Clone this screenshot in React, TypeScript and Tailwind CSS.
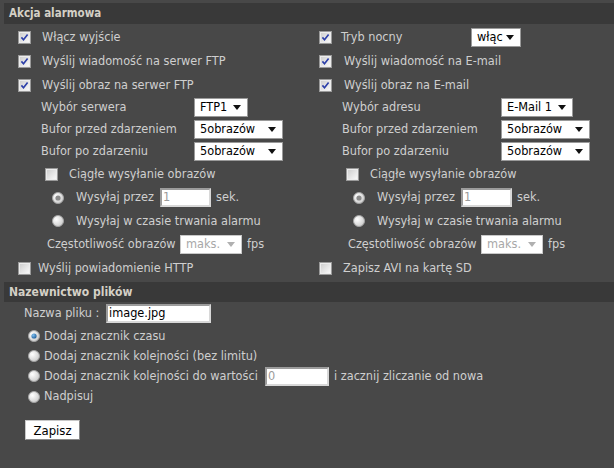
import React from "react";

const TXT = "text-[#cfcfcf]";

function Check({ checked = false }: { checked?: boolean }) {
  return (
    <svg width="13" height="13" viewBox="0 0 13 13" className="shrink-0">
      <defs>
        <linearGradient id="cbg" x1="0" y1="0" x2="1" y2="1">
          <stop offset="0" stopColor="#cfcfcf" />
          <stop offset="1" stopColor="#f8f8f8" />
        </linearGradient>
      </defs>
      <rect x="0.5" y="0.5" width="12" height="12" fill="#ececec" stroke="#9a9a9a" />
      <rect x="2" y="2" width="9" height="9" fill="url(#cbg)" />
      {checked && (
        <path d="M3.4 6.4 L5.5 8.8 L9.6 3.4" fill="none" stroke="#2b3ea8" strokeWidth="1.6" />
      )}
    </svg>
  );
}

function Radio({ checked = false, blue = false }: { checked?: boolean; blue?: boolean }) {
  return (
    <svg width="12" height="12" viewBox="0 0 12 12" className="shrink-0">
      <defs>
        <radialGradient id="rbg" cx="0.35" cy="0.35" r="0.8">
          <stop offset="0" stopColor="#ffffff" />
          <stop offset="1" stopColor="#c4c4c4" />
        </radialGradient>
        <radialGradient id="rblue" cx="0.35" cy="0.35" r="0.8">
          <stop offset="0" stopColor="#7fc0f0" />
          <stop offset="1" stopColor="#13508f" />
        </radialGradient>
      </defs>
      <circle cx="6" cy="6" r="5.5" fill="url(#rbg)" stroke="#a2a2a2" />
      {checked && <circle cx="6" cy="6" r="2.6" fill={blue ? "url(#rblue)" : "#8a8a8a"} />}
    </svg>
  );
}

function Select({
  value,
  w,
  disabled = false,
}: {
  value: string;
  w: string;
  disabled?: boolean;
}) {
  return (
    <div
      className={`${w} h-[19px] bg-white border flex items-center justify-between pl-[5px] pr-[6px] ${
        disabled ? "border-[#c8c8c8] text-[#a8a8a8]" : "border-[#9a9a9a] text-black"
      }`}
    >
      <span className="leading-none">{value}</span>
      <svg width="8" height="5" viewBox="0 0 8 5">
        <path d="M0 0 H8 L4 5 Z" fill={disabled ? "#b0b0b0" : "#111"} />
      </svg>
    </div>
  );
}

function Field({ value, w, dim = false }: { value: string; w: string; dim?: boolean }) {
  return (
    <div
      className={`${w} h-[19px] bg-white border-2 border-t-[#9c9c9c] border-l-[#9c9c9c] border-r-[#d8d8d8] border-b-[#d8d8d8] flex items-center pl-[1px] ${
        dim ? "text-[#9a9a9a]" : "text-black"
      }`}
    >
      <span className="leading-none">{value}</span>
    </div>
  );
}

function Header({ title, size }: { title: string; size: string }) {
  return (
    <div className="h-full ml-[4px] bg-[#393939] flex items-center pl-[5px]">
      <span className={`font-bold ${size} text-[#d4d0c6]`}>{title}</span>
    </div>
  );
}

function ActionColumn({ right }: { right: boolean }) {
  const sendTarget = right ? "E-mail" : "serwer FTP";
  return (
    <div className="flex flex-col">
      <div className="h-[24px] flex items-center pl-[18px]">
        <Check checked />
        {right ? (
          <>
            <span className="ml-[9px] w-[130px]">Tryb nocny</span>
            <Select value="włąc" w="w-[50px]" />
          </>
        ) : (
          <span className="ml-[11px]">Włącz wyjście</span>
        )}
      </div>
      <div className="h-[24px] flex items-center pl-[18px]">
        <Check checked />
        <span className={right ? "ml-[12px]" : "ml-[11px]"}>Wyślij wiadomość na {sendTarget}</span>
      </div>
      <div className="h-[24px] flex items-center pl-[18px]">
        <Check checked />
        <span className={right ? "ml-[12px]" : "ml-[11px]"}>Wyślij obraz na {sendTarget}</span>
      </div>
      <div className="h-[22px] flex items-center pl-[41px] mt-[-1px]">
        <span className={right ? "w-[159px]" : "w-[153px]"}>
          {right ? "Wybór adresu" : "Wybór serwera"}
        </span>
        <Select value={right ? "E-Mail 1" : "FTP1"} w={right ? "w-[72px]" : "w-[54px]"} />
      </div>
      <div className="h-[22px] flex items-center pl-[41px]">
        <span className={right ? "w-[159px]" : "w-[153px]"}>Bufor przed zdarzeniem</span>
        <Select value="5obrazów" w="w-[89px]" />
      </div>
      <div className="h-[22px] flex items-center pl-[41px]">
        <span className={right ? "w-[159px]" : "w-[153px]"}>Bufor po zdarzeniu</span>
        <Select value="5obrazów" w="w-[89px]" />
      </div>
      <div className="h-[23px] flex items-center pl-[45px] mt-[1px]">
        <Check />
        <span className="ml-[11px]">Ciągłe wysyłanie obrazów</span>
      </div>
      <div className="h-[23px] flex items-center pl-[52px]">
        <Radio checked />
        <span className="ml-[12px] w-[84px]">Wysyłaj przez</span>
        <Field value="1" w="w-[51px]" dim />
        <span className="ml-[5px]">sek.</span>
      </div>
      <div className="h-[24px] flex items-center pl-[52px]">
        <Radio />
        <span className="ml-[12px]">Wysyłaj w czasie trwania alarmu</span>
      </div>
      <div className="h-[22px] flex items-center pl-[47px]">
        <span className="w-[133px]">Częstotliwość obrazów</span>
        <Select value="maks." w="w-[62px]" disabled />
        <span className="ml-[5px]">fps</span>
      </div>
      <div className="h-[27px] flex items-center pl-[18px]">
        <Check />
        <span className={right ? "ml-[11px]" : "ml-[7px]"}>
          {right ? "Zapisz AVI na kartę SD" : "Wyślij powiadomienie HTTP"}
        </span>
      </div>
    </div>
  );
}

export default function App() {
  return (
    <div
      className={`w-[614px] h-[468px] bg-[#484848] ${TXT} text-[12.6px] font-['DejaVu_Sans_Condensed','DejaVu_Sans',sans-serif] pt-[3px] overflow-hidden`}
    >
      <div className="h-[21px]">
        <Header title="Akcja alarmowa" size="text-[11.5px]" />
      </div>
      <div className="grid grid-cols-[301px_313px] mt-[1px]">
        <ActionColumn right={false} />
        <ActionColumn right />
      </div>

      <div className="h-[20px]">
        <Header title="Nazewnictwo plików" size="text-[12px]" />
      </div>
      <div className="h-[20px] flex items-center pl-[24px] mt-[1px]">
        <span className="w-[82px]">Nazwa pliku :</span>
        <Field value="image.jpg" w="w-[105px]" />
      </div>
      <div className="pl-[28px] flex flex-col mt-[3px]">
        <div className="h-[20px] flex items-center">
          <Radio checked blue />
          <span className="ml-[4px]">Dodaj znacznik czasu</span>
        </div>
        <div className="h-[20px] flex items-center">
          <Radio />
          <span className="ml-[4px]">Dodaj znacznik kolejności (bez limitu)</span>
        </div>
        <div className="h-[20px] flex items-center">
          <Radio />
          <span className="ml-[4px] w-[221px]">Dodaj znacznik kolejności do wartości</span>
          <Field value="0" w="w-[64px]" dim />
          <span className="ml-[5px]">i zacznij zliczanie od nowa</span>
        </div>
        <div className="h-[21px] flex items-center">
          <Radio />
          <span className="ml-[4px]">Nadpisuj</span>
        </div>
      </div>
      <div className="pl-[25px] mt-[13px]">
        <button className="w-[55px] h-[20px] bg-white text-black border border-[#c8c8c8] border-r-[#8a8a8a] border-b-[#8a8a8a] text-[13px] leading-none">
          Zapisz
        </button>
      </div>
    </div>
  );
}
